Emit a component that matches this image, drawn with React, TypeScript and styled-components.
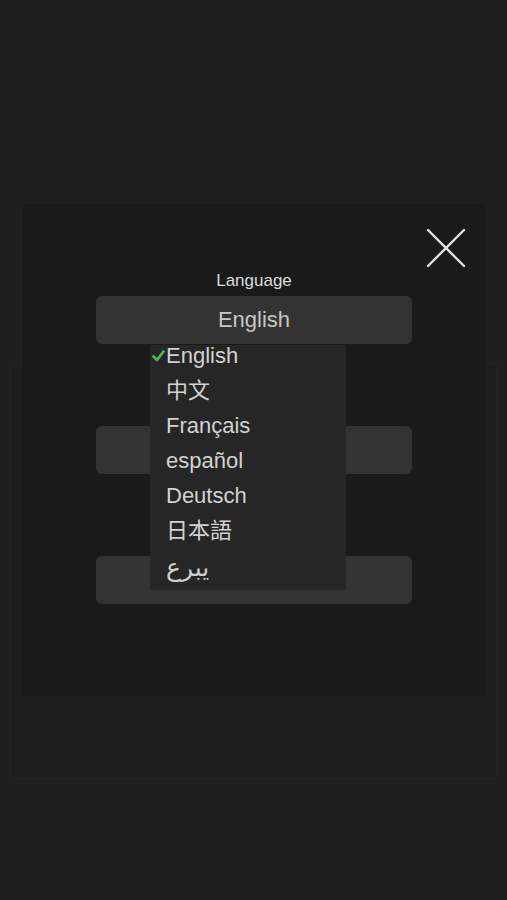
import { FC } from 'react';
import styled, { createGlobalStyle } from 'styled-components';

const GlobalStyle = createGlobalStyle`
    html, body {
        margin: 0;
        padding: 0;
        background: #1f1f1f;
    }
    body {
        font-family: "Liberation Sans", Arial, "Noto Sans CJK SC", sans-serif;
    }
`;

const Page = styled.div`
    position: relative;
    width: 507px;
    height: 900px;
    padding: 363px 10px 0;
    box-sizing: border-box;
    overflow: hidden;
`;

const BackCard = styled.div`
    height: 414px;
    background: #1e1e1e;
    border: 1px solid #232323;
    border-radius: 2px;
`;

const Overlay = styled.div`
    position: absolute;
    inset: 0;
    display: flex;
    align-items: center;
    justify-content: center;
`;

const Modal = styled.div`
    width: 462px;
    height: 492px;
    background: #1a1a1a;
    padding: 24px 19px 0 20px;
    box-sizing: border-box;
    display: flex;
    flex-direction: column;
`;

const TopBar = styled.div`
    display: flex;
    justify-content: flex-end;
`;

const CloseButton = styled.button`
    width: 40px;
    height: 40px;
    padding: 0;
    border: none;
    background: transparent;
    display: flex;
`;

const Body = styled.div`
    display: flex;
    flex-direction: column;
    align-items: center;
    padding-top: 3px;
`;

const Label = styled.div`
    color: #dcdcdc;
    font-size: 17px;
    line-height: 20px;
    margin-bottom: 5px;
`;

const Field = styled.div<{ $gap?: number }>`
    position: relative;
    width: 316px;
    margin-top: ${p => p.$gap ?? 0}px;
`;

const SelectBox = styled.div`
    height: 48px;
    border-radius: 6px;
    background: #333333;
    color: #c6c6c6;
    font-size: 22px;
    display: flex;
    align-items: center;
    justify-content: center;
`;

const Dropdown = styled.ul`
    position: absolute;
    top: calc(100% + 1px);
    left: 54px;
    width: 196px;
    margin: 0;
    padding: 0;
    list-style: none;
    background: #262626;
    z-index: 2;
`;

const Item = styled.li<{ $arabic?: boolean }>`
    height: 35px;
    padding-left: 2px;
    display: flex;
    align-items: flex-start;
    color: #d2d2d2;
    font-size: 22px;
    line-height: 22px;
    ${p => p.$arabic && `
        font-family: "DejaVu Sans", sans-serif;
        font-size: 25px;
        color: #cfcfcf;
        line-height: 26px;
    `}
`;

const CheckSlot = styled.span`
    width: 14px;
    height: 22px;
    display: flex;
    align-items: center;
    flex: none;
`;

// the Arabic entry shows up with its letters in visual order, so keep it that way
const LANGS = ['English', '中文', 'Français', 'español', 'Deutsch', '日本語', 'يبرع'];

const App: FC = () => {
    return (
        <>
            <GlobalStyle />
            <Page>
                <BackCard />
                <Overlay>
                    <Modal>
                        <TopBar>
                            <CloseButton aria-label="close">
                                <svg width="40" height="40" viewBox="0 0 40 40">
                                    <path d="M2 2 L38 38 M38 2 L2 38" stroke="#e2e2e2" strokeWidth="2.4" strokeLinecap="round" />
                                </svg>
                            </CloseButton>
                        </TopBar>
                        <Body>
                            <Label>Language</Label>
                            <Field>
                                <SelectBox>English</SelectBox>
                                <Dropdown>
                                    {LANGS.map((l, i) => (
                                        <Item key={l} $arabic={i === 6}>
                                            <CheckSlot>
                                                {i === 0 && (
                                                    <svg width="13" height="12" viewBox="0 0 13 12">
                                                        <path d="M1.5 6.5 L5 10 L11.5 1.5" stroke="#55b45a" strokeWidth="2.8" fill="none" strokeLinecap="round" strokeLinejoin="round" />
                                                    </svg>
                                                )}
                                            </CheckSlot>
                                            {l}
                                        </Item>
                                    ))}
                                </Dropdown>
                            </Field>
                            <Field $gap={82}>
                                <SelectBox />
                            </Field>
                            <Field $gap={82}>
                                <SelectBox />
                            </Field>
                        </Body>
                    </Modal>
                </Overlay>
            </Page>
        </>
    );
};

export default App;
